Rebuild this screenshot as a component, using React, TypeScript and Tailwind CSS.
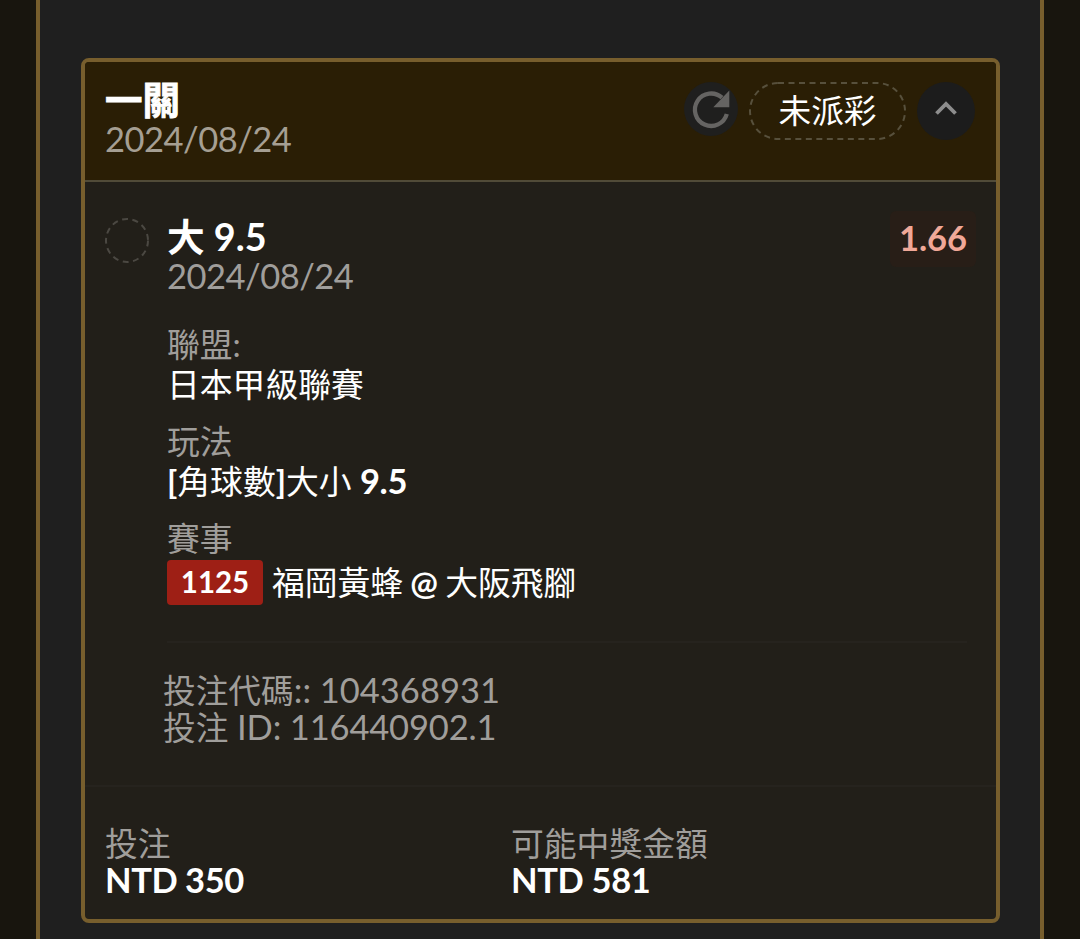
import React from 'react';

function RefreshIcon() {
  return (
    <svg width="54" height="54" viewBox="0 0 54 54" fill="none">
      <path d="M42.8 32A16.2 16.2 0 1 1 38 15.7" stroke="#656462" strokeWidth="4.3" />
      <path d="M45.3 8.5V25.2H29.3Z" fill="#656462" />
    </svg>
  );
}

function ChevronUpIcon() {
  return (
    <svg width="24" height="18" viewBox="0 0 24 18" fill="none">
      <path d="M2.5 14.5L12 5L21.5 14.5" stroke="#8d8d8d" strokeWidth="3.8" />
    </svg>
  );
}

function Header() {
  return (
    <div className="flex h-[120px] justify-between border-b-2 border-[#514b38] bg-[#2a1e05] pl-5 pr-[21px] pt-5">
      <div>
        <div className="h-[38px] text-[37.5px] leading-[35px] font-bold text-white [-webkit-text-stroke:0.8px_white]">
          一關
        </div>
        <div className="text-[34.5px] leading-[38px] tracking-[-0.5px] text-[#a59f93]">2024/08/24</div>
      </div>
      <div className="flex items-start">
        <div className="mr-[11px] h-[54px] w-[54px] rounded-full bg-[#1f1f1e]">
          <RefreshIcon />
        </div>
        <div className="mr-[11px] h-[58px] w-[157px]">
          <svg className="absolute" width="157" height="58" viewBox="0 0 157 58" fill="none">
            <rect x="1" y="1" width="155" height="56" rx="28" stroke="#57503c" strokeWidth="2" strokeDasharray="6 4.5" />
          </svg>
          <div className="text-center text-[32.7px] leading-[58px] text-white">未派彩</div>
        </div>
        <div className="flex h-[58px] w-[58px] items-center justify-center rounded-full bg-[#1c1c1c] pb-[6px]">
          <ChevronUpIcon />
        </div>
      </div>
    </div>
  );
}

function Details() {
  return (
    <div className="pl-[62px] text-[32.8px] leading-[40px]">
      <div className="pt-[30px] text-[#a09e9b]">聯盟:</div>
      <div className="text-white">日本甲級聯賽</div>
      <div className="pt-[17px] text-[#a09e9b]">玩法</div>
      <div className="h-[40px] text-white">
        <span className="font-bold">[</span>角球數<span className="font-bold">]</span>大小{' '}
        <span className="text-[34.5px] leading-none font-bold tracking-[-0.4px]">9.5</span>
      </div>
      <div className="pt-[17px] text-[#a09e9b]">賽事</div>
      <div className="flex h-[46px] items-center gap-[9px] text-white">
        <span className="flex h-[45px] w-[96px] items-center justify-center rounded bg-[#9e1f15] text-[29.5px] font-bold">
          1125
        </span>
        <span className="pt-[2px] tracking-[-0.05px]">
          福岡黃蜂 <span className="-ml-px font-bold tracking-[-1px]">@</span> 大阪飛腳
        </span>
      </div>
    </div>
  );
}

function Body() {
  return (
    <div className="h-[605px] border-b-2 border-[#26231e] pl-5 pr-[29px] pt-[34px]">
      <div className="flex justify-between">
        <div className="flex">
          <svg className="mt-[2px] mr-[18px]" width="44" height="46" viewBox="0 0 44 46" fill="none">
            <ellipse cx="22" cy="22.5" rx="21" ry="21.5" stroke="#4b4842" strokeWidth="2" strokeDasharray="6 4.5" />
          </svg>
          <div>
            <div className="text-[37.7px] leading-[41px] font-bold text-white">大 9.5</div>
            <div className="text-[34.5px] leading-[38px] tracking-[-0.5px] text-[#a09e9b]">2024/08/24</div>
          </div>
        </div>
        <div className="-mr-[9px] -mt-[5px] flex h-[56px] w-[86px] items-center justify-center rounded-md bg-[#281e17] pb-[2px] text-[34.5px] font-bold text-[#f0a898]">
          1.66
        </div>
      </div>
      <Details />
      <div className="ml-[62px] mt-[36px] border-b-2 border-[#26231e]" />
      <div className="ml-[58px] mt-[29px] text-[32.7px] leading-[37px] text-[#a09e9b]">
        <div className="h-[37px]">
          投注代碼<span className="text-[34.5px] leading-none">:: 104368931</span>
        </div>
        <div className="h-[37px]">
          投注<span className="text-[34.5px] leading-none tracking-[-0.15px]"> ID: 116440902.1</span>
        </div>
      </div>
    </div>
  );
}

function Footer() {
  return (
    <div className="grid grid-cols-[406px_1fr] pl-5 pt-[39px] text-[34.5px]">
      <div>
        <div className="h-[35px] text-[32.8px] leading-[36px] text-[#a09e9b]">投注</div>
        <div className="leading-[37px] font-bold tracking-[-0.45px] text-white">NTD 350</div>
      </div>
      <div>
        <div className="h-[35px] text-[32.8px] leading-[36px] text-[#a09e9b]">可能中獎金額</div>
        <div className="leading-[37px] font-bold tracking-[-0.35px] text-white">NTD 581</div>
      </div>
    </div>
  );
}

function App() {
  return (
    <div className="flex h-[939px] w-[1080px] justify-center overflow-hidden bg-[#18150e] font-[Lato,'Noto_Sans_CJK_TC',sans-serif]">
      <div className="w-[1008px] border-x-4 border-[#775e2d] bg-[#1f1f1f] pl-[41px] pt-[58px]">
        <div className="h-[865px] w-[919px] overflow-hidden rounded-lg border-4 border-[#775e2d] bg-[#221f19]">
          <Header />
          <Body />
          <Footer />
        </div>
      </div>
    </div>
  );
}
export default App;
